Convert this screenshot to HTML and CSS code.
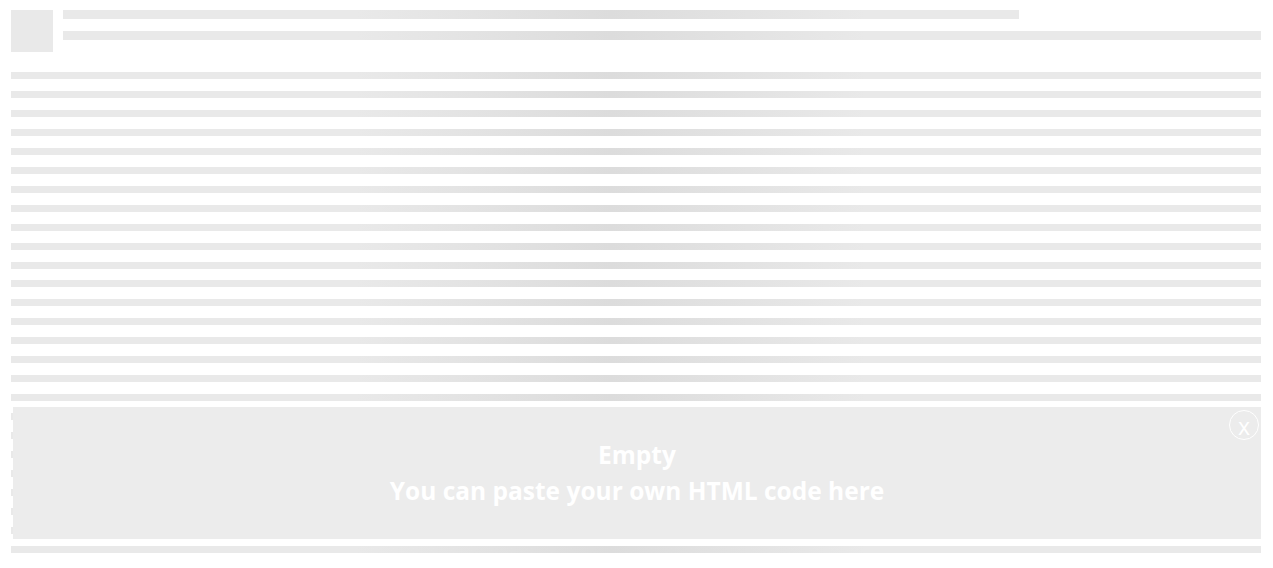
FILE: index.html
```html
<!DOCTYPE html>
<html lang="en">
<head>
<meta charset="utf-8">
<title>Placeholder</title>
<link rel="stylesheet" href="styles.css">
</head>
<body>
<div class="page">
  <div class="header">
    <div class="avatar sk"></div>
    <div class="header-bars">
      <div class="bar bar-short sk"></div>
      <div class="bar bar-long sk"></div>
    </div>
  </div>
  <div class="lines">
    <div class="line sk"></div><div class="line sk"></div><div class="line sk"></div><div class="line sk"></div>
    <div class="line sk"></div><div class="line sk"></div><div class="line sk"></div><div class="line sk"></div>
    <div class="line sk"></div><div class="line sk"></div><div class="line sk"></div><div class="line sk"></div>
    <div class="line sk"></div><div class="line sk"></div><div class="line sk"></div><div class="line sk"></div>
    <div class="line sk"></div><div class="line sk"></div><div class="line sk"></div><div class="line sk"></div>
    <div class="line sk"></div><div class="line sk"></div><div class="line sk"></div><div class="line sk"></div>
    <div class="line sk"></div><div class="line sk"></div>
  </div>
</div>
<div class="overlay">
  <div class="overlay-text">
    <div>Empty</div>
    <div>You can paste your own HTML code here</div>
  </div>
  <div class="close">x</div>
</div>
</body>
</html>
```
FILE: styles.css
```css
html, body {
  margin: 0;
  padding: 0;
  background: #ffffff;
  overflow: hidden;
}

.page {
  padding: 10px 12px 0 11px;
}

.sk {
  background-color: #e9e9e9;
  background-image: linear-gradient(90deg, #e9e9e9 0%, #e9e9e9 28%, #dcdcdc 48%, #e9e9e9 68%, #e9e9e9 100%);
  background-attachment: fixed;
  background-size: 1273px 100%;
}

.header {
  display: flex;
  gap: 10px;
  height: 62px;
}

.avatar {
  width: 42px;
  height: 42px;
  flex: none;
  background-image: none;
  background-color: #e9e9e9;
}

.header-bars {
  flex: 1;
  display: flex;
  flex-direction: column;
  gap: 12px;
}

.bar-short {
  width: 956px;
  height: 9px;
}

.bar-long {
  width: 100%;
  height: 9px;
}

.lines {
  display: flex;
  flex-direction: column;
  gap: 11.96px;
}

.line {
  height: 7px;
}

.overlay {
  position: absolute;
  left: 13px;
  right: 12px;
  top: 407px;
  height: 132px;
  background: #ececec;
  display: flex;
  align-items: center;
  justify-content: center;
}

.overlay-text {
  font-family: "Open Sans", "Liberation Sans", sans-serif;
  font-weight: 700;
  font-size: 24.5px;
  line-height: 36px;
  color: #ffffff;
  text-align: center;
  margin-top: -1px;
}

.close {
  position: absolute;
  top: 3px;
  right: 2px;
  width: 28px;
  height: 28px;
  border: 1px solid #ffffff;
  border-radius: 50%;
  color: #ffffff;
  font-family: "Open Sans", "Liberation Sans", sans-serif;
  font-size: 23px;
  line-height: 30px;
  text-align: center;
}
```
